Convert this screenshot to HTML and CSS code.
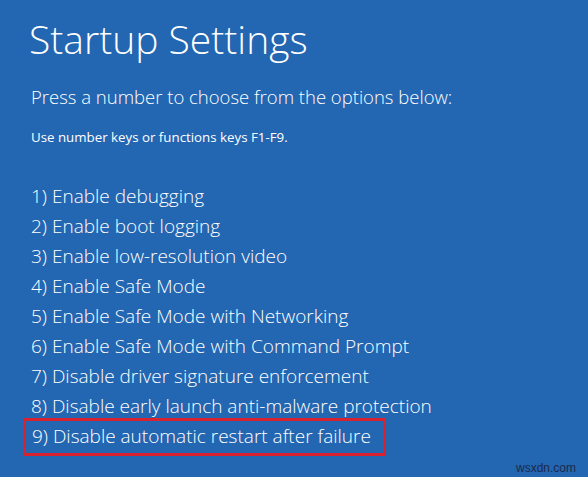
FILE: index.html
```html
<!DOCTYPE html>
<html lang="en">
<head>
  <meta charset="UTF-8">
  <meta name="viewport" content="width=device-width, initial-scale=1.0">
  <title>Startup Settings</title>
  <link rel="stylesheet" href="styles.css">
</head>
<body>
  <div class="screen">
    <h1>Startup Settings</h1>
    <p class="lead">Press a number to choose from the options below:</p>
    <p class="hint">Use number keys or functions keys F1-F9.</p>
    <ul class="options">
      <li>1) Enable debugging</li>
      <li>2) Enable boot logging</li>
      <li>3) Enable low-resolution video</li>
      <li>4) Enable Safe Mode</li>
      <li>5) Enable Safe Mode with Networking</li>
      <li>6) Enable Safe Mode with Command Prompt</li>
      <li>7) Disable driver signature enforcement</li>
      <li>8) Disable early launch anti-malware protection</li>
      <li class="marked">9) Disable automatic restart after failure</li>
    </ul>
    <span class="mark">wsxdn.com</span>
  </div>
</body>
</html>
```

FILE: styles.css
```css
body {
  margin: 0;
  background-color: #2366b2;
  font-family: "Open Sans", "Noto Sans", sans-serif;
  color: #ffffff;
}
.screen {
  position: relative;
  width: 588px;
  height: 477px;
  padding: 12px 0 0 29px;
  box-sizing: border-box;
  overflow: hidden;
}
h1 {
  margin: 0;
  font-size: 39px;
  font-weight: 300;
  line-height: 54px;
}
.lead {
  margin: 19px 0 0 2px;
  font-size: 18.5px;
  font-weight: 300;
  line-height: 24px;
}
.hint {
  margin: 19px 0 0 2px;
  font-size: 13.3px;
  line-height: 18px;
}
.options {
  list-style: none;
  margin: 35px 0 0 2px;
  padding: 0;
}
.options li {
  font-size: 19px;
  font-weight: 300;
  line-height: 30px;
}
/* highlighted option, framed in red */
.options .marked {
  margin: -3px 0 0 -8px;
  padding: 0 0 2px 6px;
  width: 351px;
  border: 3px solid #d8222f;
}
.mark {
  position: absolute;
  right: 12px;
  bottom: 2px;
  font-family: "Liberation Sans", Arial, sans-serif;
  font-size: 12px;
  color: #1b2a4a;
}
```
